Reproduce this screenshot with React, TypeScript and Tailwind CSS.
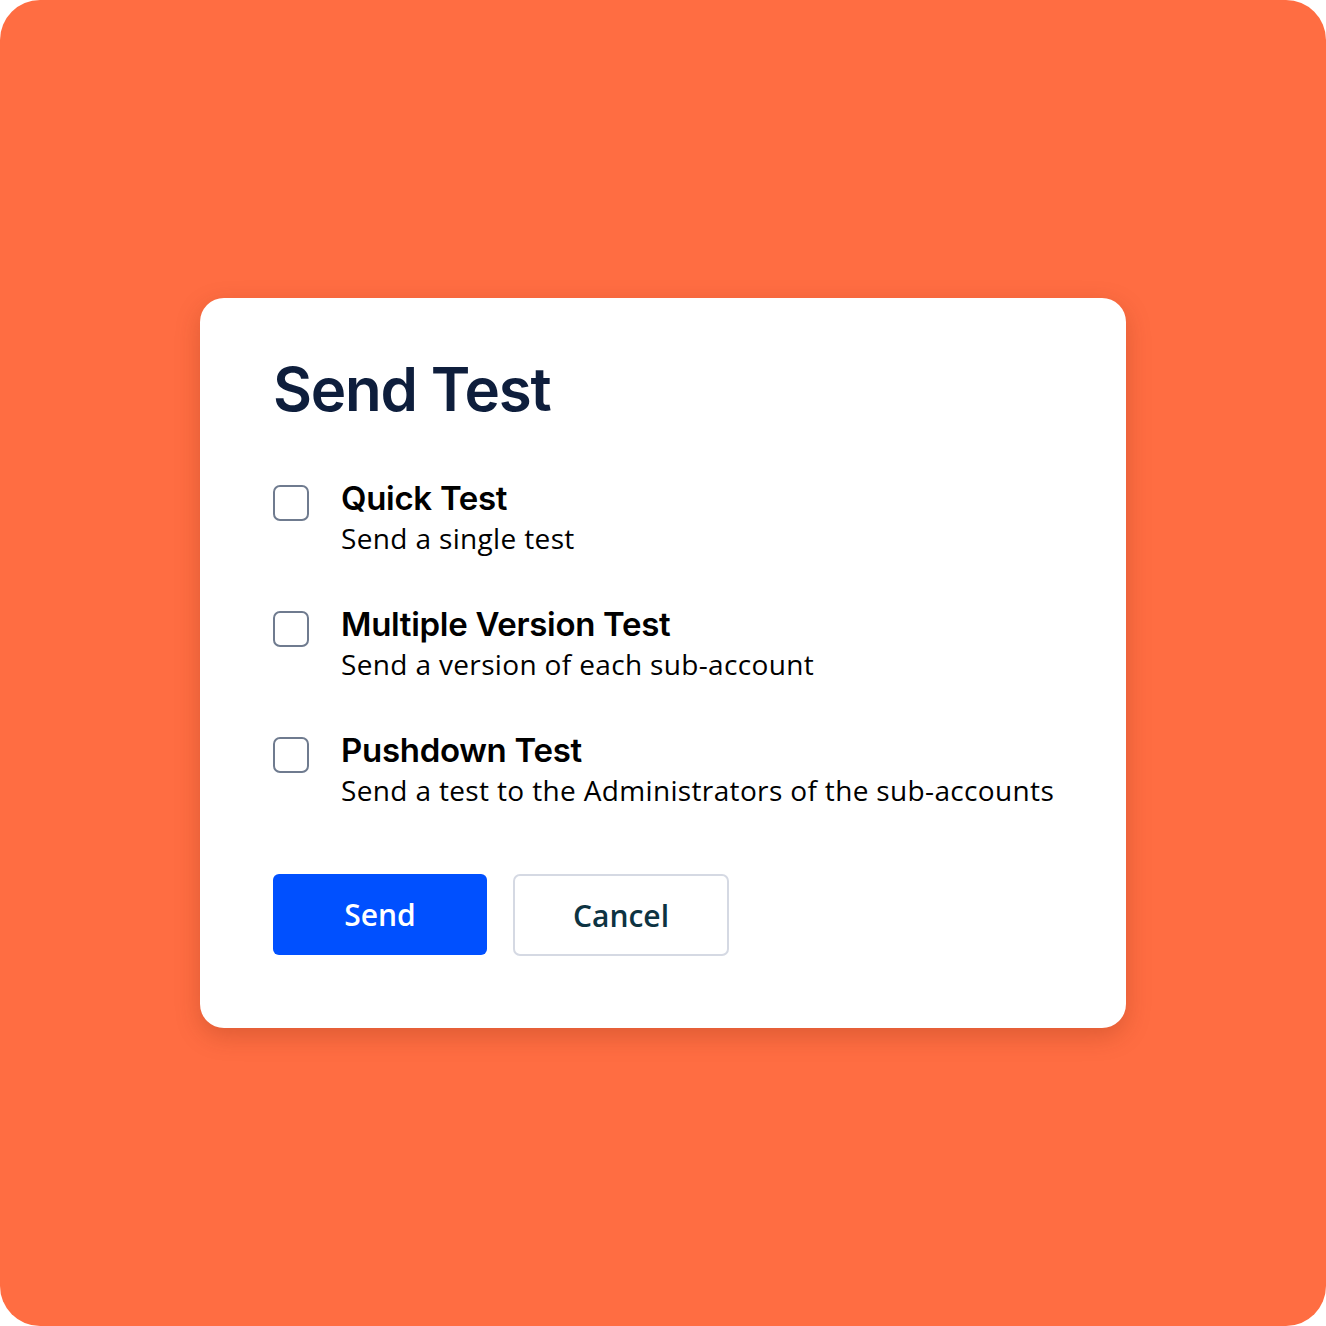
import { useState } from "react";

const options = [
  { title: "Quick Test", desc: "Send a single test" },
  { title: "Multiple Version Test", desc: "Send a version of each sub-account" },
  { title: "Pushdown Test", desc: "Send a test to the Administrators of the sub-accounts" },
];

function Option({ title, desc }: { title: string; desc: string }) {
  const [checked, setChecked] = useState(false);
  return (
    <label className="flex items-start gap-8 cursor-pointer">
      <span
        onClick={() => setChecked(!checked)}
        className={`mt-[7px] w-[36px] h-[36px] shrink-0 rounded-[7px] border-2 border-[#6f7b8f] ${checked ? "bg-[#0050ff]" : "bg-white"}`}
      />
      <span className="flex flex-col">
        <span className="text-[33px] leading-[40px] font-semibold tracking-[-0.3px] text-black font-['Inter',sans-serif]">
          {title}
        </span>
        <span className="text-[28px] leading-[40px] text-black font-['Open_Sans',sans-serif] tracking-[0.35px]">
          {desc}
        </span>
      </span>
    </label>
  );
}

export default function App() {
  return (
    <div className="w-[1326px] h-[1326px] bg-white">
      <div className="w-full h-full rounded-[40px] bg-[#ff6d42] flex items-center justify-center">
        <div className="w-[926px] h-[730px] bg-white rounded-[24px] shadow-[0_8px_24px_rgba(120,40,10,0.25)] pl-[73px] pt-[56px] flex flex-col">
          <h1 className="text-[60px] leading-[70px] font-semibold tracking-[-1.2px] text-[#0e1e3c] font-['Inter',sans-serif]">
            Send Test
          </h1>
          <div className="mt-[54px] flex flex-col gap-[46px]">
            {options.map((o) => (
              <Option key={o.title} title={o.title} desc={o.desc} />
            ))}
          </div>
          <div className="mt-[64px] flex gap-[26px]">
            <button className="w-[214px] h-[81px] rounded-[6px] bg-[#0050ff] text-white text-[30px] font-semibold font-['Open_Sans',sans-serif]">
              Send
            </button>
            <button className="w-[216px] h-[82px] rounded-[7px] border-2 border-[#d5d9e3] bg-white text-[#0d3342] text-[30px] font-semibold font-['Open_Sans',sans-serif]">
              Cancel
            </button>
          </div>
        </div>
      </div>
    </div>
  );
}
